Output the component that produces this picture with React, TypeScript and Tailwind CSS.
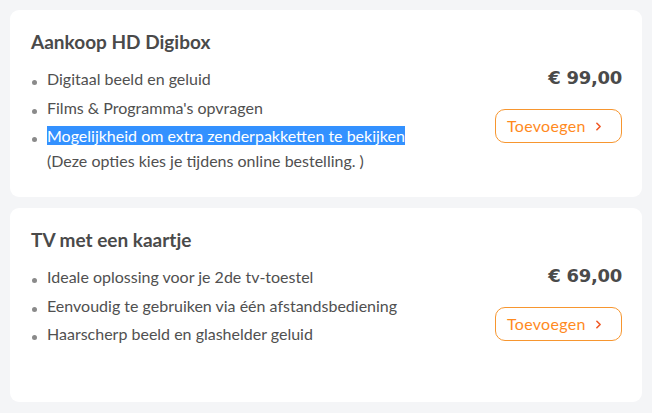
import { ChevronRight } from "lucide-react";

interface Product {
  title: string;
  price: string;
  features: React.ReactNode[];
  height: string;
}

const products: Product[] = [
  {
    title: "Aankoop HD Digibox",
    price: "€ 99,00",
    height: "h-[187px]",
    features: [
      "Digitaal beeld en geluid",
      "Films & Programma's opvragen",
      <>
        <span className="bg-[#3391ff] text-white">
          Mogelijkheid om extra zenderpakketten te bekijken
        </span>
        <br />
        (Deze opties kies je tijdens online bestelling. )
      </>,
    ],
  },
  {
    title: "TV met een kaartje",
    price: "€ 69,00",
    height: "h-[194px]",
    features: [
      "Ideale oplossing voor je 2de tv-toestel",
      "Eenvoudig te gebruiken via één afstandsbediening",
      "Haarscherp beeld en glashelder geluid",
    ],
  },
];

function ProductCard({ product }: { product: Product }) {
  return (
    <div
      className={`flex justify-between rounded-[9px] bg-white pl-[21px] pr-[20px] pt-[20px] ${product.height}`}
    >
      {/* Info */}
      <div>
        <h2 className="text-[19px] font-bold leading-[24px] text-[#4a4a4a]">
          {product.title}
        </h2>

        <ul className="mt-[12px] flex flex-col gap-[3.5px]">
          {product.features.map((feature, i) => (
            <li key={i} className="flex">
              <span className="mr-[10px] mt-[14px] ml-[1px] h-[5px] w-[5px] shrink-0 rounded-full bg-[#8a8a8a]" />
              <span className="text-[16px] leading-[25px] text-[#505050]">
                {feature}
              </span>
            </li>
          ))}
        </ul>
      </div>

      {/* Price + action */}
      <div className="flex flex-col items-end">
        <div className="mt-[36px] font-['DejaVu_Sans',sans-serif] text-[18px] font-bold leading-[24px] tracking-[-0.3px] text-[#4a4a4a]">
          {product.price}
        </div>

        <button className="mt-[19px] flex h-[34px] w-[127px] items-center rounded-[10px] border border-[#f7962f] pl-[11px] pr-[16px] text-[16px] tracking-[0.3px] text-[#ff8a1e]">
          <span>Toevoegen</span>
          <ChevronRight size={13} strokeWidth={3} className="ml-auto text-[#f05a28]" />
        </button>
      </div>
    </div>
  );
}

export default function App() {
  return (
    <div
      className="flex h-[413px] w-[652px] flex-col gap-[11px] bg-[#f4f5f7] p-[10px]"
      style={{ fontFamily: "Lato, 'Open Sans', sans-serif" }}
    >
      {products.map((p) => (
        <ProductCard key={p.title} product={p} />
      ))}
    </div>
  );
}
